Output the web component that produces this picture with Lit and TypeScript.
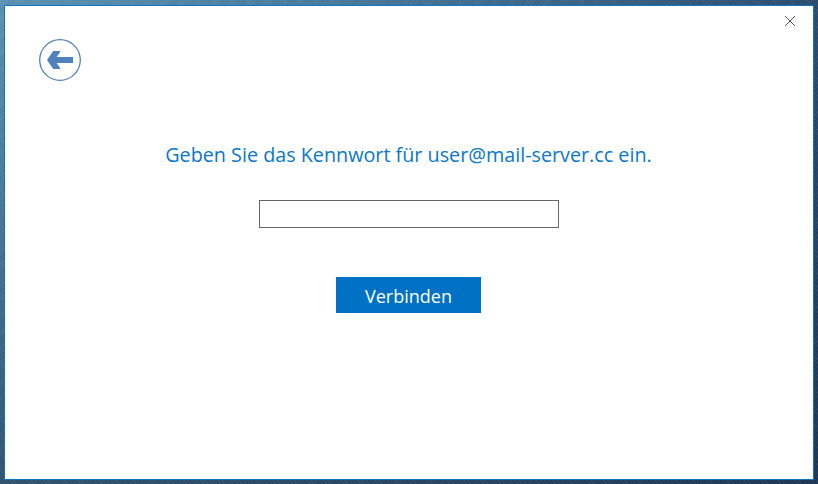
import { LitElement, css, html } from 'lit'
import { customElement } from 'lit/decorators.js'

@customElement('app-root')
export class AppRoot extends LitElement {
  static styles = css`
    :host {
      display: block;
      width: 818px;
      height: 484px;
      font-family: 'Open Sans', 'Noto Sans', sans-serif;
    }
    .desktop {
      box-sizing: border-box;
      width: 818px;
      height: 484px;
      padding: 5px 4px 4px 4px;
      background:
        repeating-linear-gradient(45deg, rgba(255, 255, 255, 0.05) 0 1px, transparent 1px 3px),
        repeating-linear-gradient(-45deg, rgba(0, 0, 0, 0.07) 0 1px, transparent 1px 2px),
        linear-gradient(to bottom, transparent 0%, rgba(20, 40, 70, 0.6) 100%),
        linear-gradient(to right, #5c96b8 0%, #4a7da0 40%, #2b4e74 100%);
    }
    .window {
      box-sizing: border-box;
      height: 100%;
      display: flex;
      flex-direction: column;
      background: #fff;
      border: 1px solid #0f75c0;
    }
    .top {
      display: flex;
      justify-content: space-between;
      align-items: flex-start;
      padding: 9px 17px 0 34px;
    }
    .back {
      display: block;
      margin-top: 24px;
      padding: 0;
      border: 0;
      background: none;
      width: 42px;
      height: 42px;
    }
    .close {
      display: block;
      padding: 0;
      border: 0;
      background: none;
      width: 12px;
      height: 12px;
    }
    .form {
      display: flex;
      flex-direction: column;
      align-items: center;
    }
    h1 {
      margin: 60px 1px 0 0;
      font-size: 19.75px;
      line-height: 28px;
      font-weight: 400;
      color: #0a78c8;
    }
    input {
      box-sizing: border-box;
      display: block;
      margin-top: 31px;
      width: 300px;
      height: 28px;
      border: 1px solid #666;
      background: #fff;
      outline: none;
    }
    .connect {
      box-sizing: border-box;
      margin: 49px 1px 0 0;
      width: 145px;
      height: 36px;
      border: 0;
      padding: 2px 0 0;
      background: #0072c6;
      color: #fff;
      font: inherit;
      font-size: 18px;
    }
  `

  render() {
    return html`
      <div class="desktop">
        <div class="window">
          <div class="top">
            <button class="back" aria-label="Zurück">
              <svg width="42" height="42" viewBox="0 0 42 42">
                <circle cx="21" cy="21" r="20.3" fill="#fff" stroke="#4f81bd" stroke-width="1.3" />
                <path d="M8 21 L14.3 12 H21.7 L17.7 18 H34 V24 H17.7 L21.7 30 H14.3 Z" fill="#4f81bd" />
              </svg>
            </button>
            <button class="close" aria-label="Schließen">
              <svg width="12" height="12" viewBox="0 0 12 12">
                <path d="M1 1 L11 11 M11 1 L1 11" stroke="#555" stroke-width="1" fill="none" />
              </svg>
            </button>
          </div>
          <div class="form">
            <h1>Geben Sie das Kennwort für user@mail-server.cc ein.</h1>
            <input type="password" />
            <button class="connect">Verbinden</button>
          </div>
        </div>
      </div>
    `
  }
}
